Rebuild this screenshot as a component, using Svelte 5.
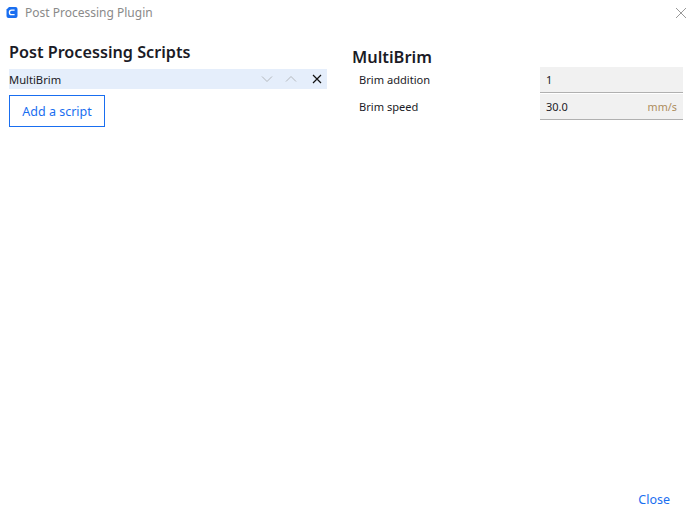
<script>
  const settings = [
    { label: "Brim addition", value: "1", unit: "" },
    { label: "Brim speed", value: "30.0", unit: "mm/s" },
  ];
</script>

<div class="window">
  <header class="titlebar">
    <div class="title">
      <svg class="logo" width="12" height="11" viewBox="0 0 12 11">
        <path d="M3 0 H9.5 Q11.5 0 11.5 2 V9 Q11.5 11 9.5 11 H2.5 Q0.5 11 0.5 9 V2.5 Z" fill="#196ef0" />
        <path d="M8.6 3.2 H5.6 Q3.4 3.2 3.4 5.4 Q3.4 7.6 5.6 7.6 H8.6" fill="none" stroke="#fff" stroke-width="1.3" />
      </svg>
      <span>Post Processing Plugin</span>
    </div>
    <button class="win-close" aria-label="Close window">
      <svg width="12" height="12" viewBox="0 0 12 12">
        <path d="M1 1 L11 11 M11 1 L1 11" stroke="#999" stroke-width="1" fill="none" />
      </svg>
    </button>
  </header>

  <main class="content">
    <section class="scripts">
      <h1>Post Processing Scripts</h1>
      <div class="script-row">
        <span>MultiBrim</span>
        <div class="actions">
          <svg width="12" height="8" viewBox="0 0 12 8">
            <path d="M1 1.5 L6 6.5 L11 1.5" stroke="#b4b8bd" fill="none" />
          </svg>
          <svg width="12" height="8" viewBox="0 0 12 8">
            <path d="M1 6.5 L6 1.5 L11 6.5" stroke="#b4b8bd" fill="none" />
          </svg>
          <svg width="10" height="10" viewBox="0 0 10 10">
            <path d="M1 1 L9 9 M9 1 L1 9" stroke="#111" stroke-width="1.2" fill="none" />
          </svg>
        </div>
      </div>
      <button class="add">Add a script</button>
    </section>

    <section class="details">
      <h2>MultiBrim</h2>
      {#each settings as s}
        <div class="setting">
          <span class="label">{s.label}</span>
          <div class="field">
            <span>{s.value}</span>
            <span class="unit">{s.unit}</span>
          </div>
        </div>
      {/each}
    </section>
  </main>

  <footer class="footer">
    <button class="close">Close</button>
  </footer>
</div>

<style>
  :global(body) {
    margin: 0;
    background: #fff;
  }
  .window {
    width: 695px;
    height: 523px;
    display: flex;
    flex-direction: column;
    font-family: "Noto Sans", sans-serif;
    font-size: 11px;
    color: #1b1b26;
    overflow: hidden;
  }
  .titlebar {
    height: 25px;
    display: flex;
    align-items: center;
    justify-content: space-between;
    padding: 0 8px 0 6px;
    flex: none;
  }
  .title {
    display: flex;
    align-items: center;
    gap: 7px;
    color: #8a8a8a;
    font-size: 12px;
  }
  .logo {
    display: block;
  }
  .win-close {
    border: 0;
    background: none;
    padding: 0;
    display: flex;
  }
  .content {
    flex: 1;
    display: flex;
    padding: 16px 12px 0 9px;
    gap: 25px;
  }
  .scripts {
    width: 318px;
    flex: none;
  }
  h1 {
    margin: 0;
    font-size: 16.2px;
    font-weight: 600;
    line-height: 22px;
  }
  .script-row {
    margin-top: 6px;
    height: 20px;
    background: #e5eefb;
    display: flex;
    align-items: center;
    justify-content: space-between;
    font-size: 11.2px;
  }
  .actions {
    display: flex;
    align-items: center;
    gap: 13px;
    padding-right: 5px;
  }
  .actions svg:nth-child(2) {
    margin-left: -1px;
    margin-right: 2px;
  }
  .add {
    display: block;
    margin-top: 6px;
    width: 96px;
    height: 32px;
    background: #fff;
    border: 1px solid #196ef0;
    color: #196ef0;
    font: 12.5px "Noto Sans", sans-serif;
    padding: 0;
  }
  .details {
    flex: 1;
    padding-top: 7px;
  }
  h2 {
    margin: 0;
    font-size: 16.4px;
    font-weight: 600;
    line-height: 18px;
  }
  .setting {
    display: flex;
    align-items: center;
    justify-content: space-between;
    padding-left: 7px;
    height: 27px;
  }
  .label {
    font-size: 11.1px;
  }
  .field {
    box-sizing: border-box;
    width: 143px;
    height: 26px;
    background: #f1f1f1;
    border-bottom: 1px solid #b0b0b0;
    display: flex;
    align-items: center;
    justify-content: space-between;
    padding: 0 6px;
  }
  .unit {
    color: #ad8d5c;
    font-size: 10.8px;
  }
  .footer {
    flex: none;
    height: 37px;
    display: flex;
    justify-content: flex-end;
    padding-right: 25px;
  }
  .close {
    border: 0;
    background: none;
    padding: 0;
    height: 26px;
    color: #196ef0;
    font: 12.5px "Noto Sans", sans-serif;
  }
</style>
